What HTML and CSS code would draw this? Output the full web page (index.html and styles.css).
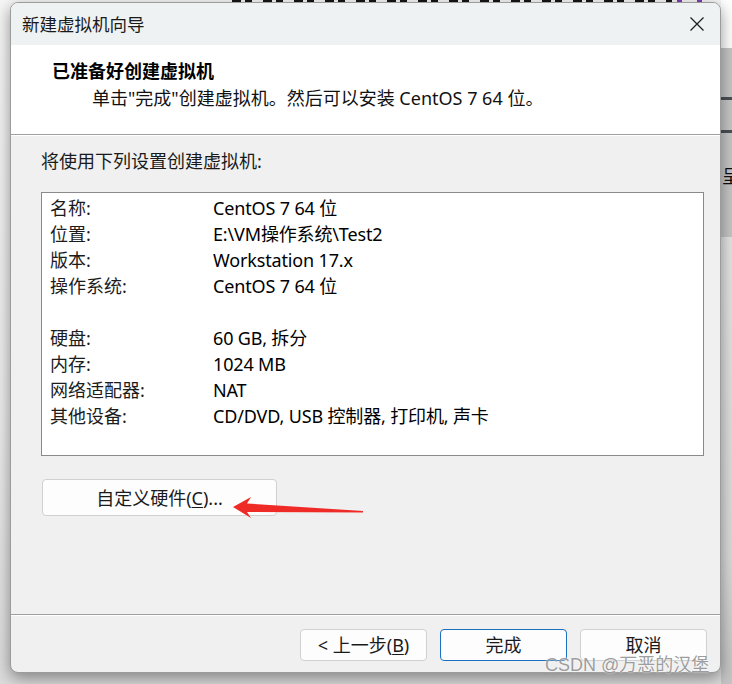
FILE: index.html
```html
<!DOCTYPE html>
<html lang="zh-CN">
<head>
<meta charset="utf-8">
<title>新建虚拟机向导</title>
<link rel="stylesheet" href="styles.css">
</head>
<body>
<div class="desk">
  <div class="bg-top" aria-hidden="true"></div>
  <div class="bg-right">
    <span class="bar bar-1"></span>
    <span class="bar bar-2"></span>
    <span class="bg-glyph">呈</span>
  </div>

  <div class="dialog">
    <div class="titlebar">
      <span class="title">新建虚拟机向导</span>
      <svg class="close" viewBox="0 0 14 14" width="14" height="14" aria-hidden="true">
        <path d="M0.5 0.5 L13.5 13.5 M13.5 0.5 L0.5 13.5" stroke="#1b1b1b" stroke-width="1.2" fill="none"/>
      </svg>
    </div>

    <div class="header">
      <div class="h-title">已准备好创建虚拟机</div>
      <div class="h-sub">单击"完成"创建虚拟机。然后可以安装 CentOS 7 64 位。</div>
    </div>

    <div class="content">
      <div class="intro">将使用下列设置创建虚拟机:</div>
      <div class="summary">
        <div class="row"><span class="k">名称:</span><span class="v">CentOS 7 64 位</span></div>
        <div class="row"><span class="k">位置:</span><span class="v">E:\VM操作系统\Test2</span></div>
        <div class="row"><span class="k">版本:</span><span class="v">Workstation 17.x</span></div>
        <div class="row"><span class="k">操作系统:</span><span class="v">CentOS 7 64 位</span></div>
        <div class="row"></div>
        <div class="row"><span class="k">硬盘:</span><span class="v">60 GB, 拆分</span></div>
        <div class="row"><span class="k">内存:</span><span class="v">1024 MB</span></div>
        <div class="row"><span class="k">网络适配器:</span><span class="v">NAT</span></div>
        <div class="row"><span class="k">其他设备:</span><span class="v">CD/DVD, USB 控制器, 打印机, 声卡</span></div>
      </div>
      <button class="btn btn-custom">自定义硬件(<u>C</u>)...</button>
    </div>

    <div class="footer">
      <button class="btn">&lt; 上一步(<u>B</u>)</button>
      <button class="btn btn-primary">完成</button>
      <button class="btn">取消</button>
    </div>
  </div>

  <svg class="arrow" viewBox="0 0 140 26" width="140" height="26" aria-hidden="true">
    <polygon points="3,13 21,3 17,9.5 133,17 133,18.5 17,18 21,24" fill="#ee2b27"/>
  </svg>

  <div class="watermark">CSDN @万恶的汉堡</div>
</div>
</body>
</html>
```

FILE: styles.css
```css
* { box-sizing: border-box; }

html, body {
  margin: 0;
  padding: 0;
}

body {
  font-family: "Noto Sans", "Noto Sans CJK SC", sans-serif;
  color: #000;
}

.desk {
  position: relative;
  width: 732px;
  height: 684px;
  overflow: hidden;
  padding: 2px 0 0 10px;
  background: linear-gradient(to bottom, #f6f6f6 0%, #ececec 60%, #dcdcdc 100%);
}

/* bottoms of large dark heading letters from the page behind the dialog */
.bg-top {
  position: absolute;
  left: 232px;
  top: 0;
  width: 470px;
  height: 4px;
  background:
    linear-gradient(to right, transparent 0, transparent 445px, #7b3fb5 445px, #7b3fb5 450px, transparent 450px, transparent 465px, #7b3fb5 465px, #7b3fb5 470px),
    repeating-linear-gradient(to right, #151515 0, #151515 9px, transparent 9px, transparent 13px, #151515 13px, #151515 20px, transparent 20px, transparent 31px);
  background-size: 470px 4px, 440px 3px;
  background-repeat: no-repeat;
}

.bg-right {
  position: absolute;
  left: 721px;
  top: 0;
  width: 11px;
  height: 684px;
  background: linear-gradient(to bottom, #ffffff 0, #ffffff 48px, #c6c6c6 48px, #c6c6c6 237px, #e4e4e4 237px, #dadada 560px, #c4c4c4 100%);
}

.bar {
  position: absolute;
  left: 0;
  width: 11px;
  height: 3px;
  background: #4a5056;
}
.bar-1 { top: 97px; }
.bar-2 { top: 130px; }

.bg-glyph {
  position: absolute;
  left: 1px;
  top: 163px;
  font-family: "Noto Sans CJK SC", sans-serif;
  font-size: 18px;
  line-height: 24px;
  color: #111;
}

.dialog {
  position: relative;
  z-index: 1;
  width: 711px;
  height: 671px;
  border: 1px solid #9c9c9c;
  border-radius: 8px;
  overflow: hidden;
  display: flex;
  flex-direction: column;
  background: #f0f0f0;
  box-shadow: 0 5px 16px rgba(0, 0, 0, 0.42);
}

.titlebar {
  height: 42px;
  flex: none;
  background: #eef2f3;
  display: flex;
  align-items: center;
  justify-content: space-between;
  padding: 0 16px 0 11px;
}

.title {
  font-family: "Noto Sans CJK SC", sans-serif;
  font-size: 17.5px;
  line-height: 24px;
  color: #1a1a1a;
}

.close { display: block; }

.header {
  height: 90px;
  flex: none;
  background: #ffffff;
  border-bottom: 1px solid #a0a0a0;
  padding: 13px 0 0 41px;
}

.h-title {
  font-family: "Noto Sans CJK SC", sans-serif;
  font-weight: 700;
  font-size: 18px;
  line-height: 24px;
}

.h-sub {
  margin: 4px 0 0 40px;
  font-size: 18px;
  line-height: 24px;
  color: #111;
}

.content {
  flex: 1;
  border-top: 1px solid #ffffff;
  padding: 13px 16px 0 30px;
  font-size: 18px;
}

.intro {
  line-height: 24px;
  color: #1a1a1a;
}

.summary {
  margin-top: 19px;
  height: 264px;
  background: #ffffff;
  border: 1px solid #8a8a8a;
  padding: 2px 0 0 8px;
}

.row {
  display: flex;
  height: 26px;
  align-items: center;
  line-height: 24px;
}

.k {
  width: 163px;
  flex: none;
  color: #1c1c1c;
}

.v {
  color: #000;
  letter-spacing: -0.15px;
}

.btn {
  font-family: "Noto Sans", "Noto Sans CJK SC", sans-serif;
  font-size: 18px;
  line-height: 24px;
  color: #1a1a1a;
  background: #fdfdfd;
  border: 1px solid #d0d0d0;
  border-radius: 4px;
  padding: 0;
  width: 127px;
  height: 32px;
}

.btn u { text-underline-offset: 2px; }

.btn-custom {
  display: block;
  margin: 23px 0 0 1px;
  width: 235px;
  height: 37px;
}

.btn-primary {
  border-color: #1d6fbf;
}

.footer {
  height: 58px;
  flex: none;
  border-top: 1px solid #a0a0a0;
  box-shadow: inset 0 1px 0 #ffffff;
  display: flex;
  justify-content: flex-end;
  gap: 13px;
  padding: 14px 13px 0 0;
}

.arrow {
  position: absolute;
  z-index: 2;
  left: 230px;
  top: 494px;
}

.watermark {
  position: absolute;
  z-index: 3;
  left: 545px;
  top: 653px;
  font-family: "Liberation Sans", "Noto Sans CJK SC", sans-serif;
  font-size: 18px;
  line-height: 24px;
  color: rgba(140, 140, 140, 0.85);
  text-shadow: 0 0 2px rgba(255, 255, 255, 0.9);
  white-space: nowrap;
}
```
